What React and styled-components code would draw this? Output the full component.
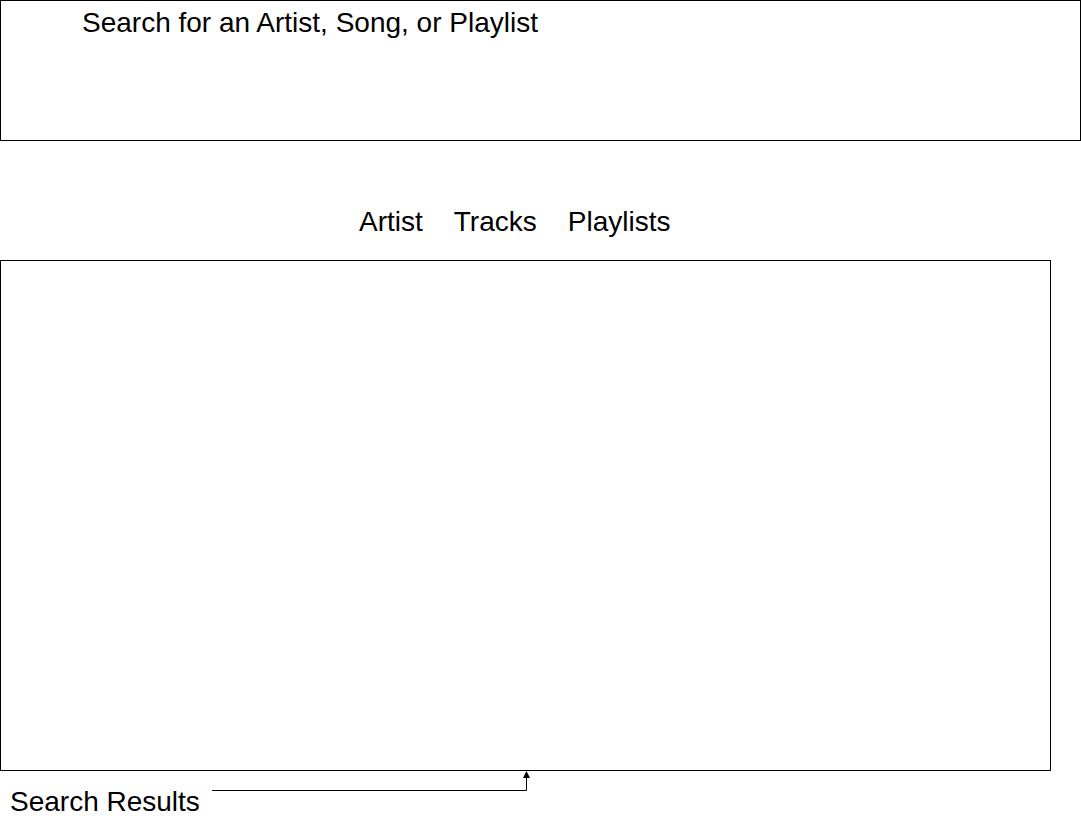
import * as React from "react";
import styled, { createGlobalStyle } from "styled-components";

const GlobalStyle = createGlobalStyle`
  body {
    margin: 0;
    background: #fff;
    color: #000;
    font-family: "Liberation Sans", Arial, Helvetica, sans-serif;
  }
`;

const Page = styled.div`
  width: 1081px;
  height: 816px;
  overflow: hidden;
  font-size: 28px;
  line-height: 32px;
`;

const SearchBox = styled.div`
  box-sizing: border-box;
  width: 1081px;
  height: 141px;
  border: 1px solid #000;
  padding: 6px 0 0 81px;
`;

const Tabs = styled.nav`
  display: flex;
  gap: 31px;
  margin-top: 65px;
  padding-left: 359px;
`;

const Tab = styled.span`
  white-space: nowrap;
`;

const ResultsBox = styled.div`
  box-sizing: border-box;
  width: 1051px;
  height: 511px;
  margin-top: 22px;
  border: 1px solid #000;
`;

const Footer = styled.div`
  display: flex;
  align-items: flex-start;
  gap: 12px;
`;

const Label = styled.span`
  padding: 15px 0 0 10px;
  white-space: nowrap;
`;

const Connector = () => (
  <svg width="320" height="24" viewBox="0 0 320 24">
    <path d="M0 19.5 H314.5 V6" fill="none" stroke="#000" strokeWidth="1" />
    <polygon points="314.5,0 318,7 311,7" fill="#000" />
  </svg>
);

const App = () => {
  const tabs = ["Artist", "Tracks", "Playlists"];

  return (
    <Page>
      <GlobalStyle />
      <SearchBox>Search for an Artist, Song, or Playlist</SearchBox>
      <Tabs>
        {tabs.map((t) => (
          <Tab key={t}>{t}</Tab>
        ))}
      </Tabs>
      <ResultsBox />
      <Footer>
        <Label>Search Results</Label>
        <Connector />
      </Footer>
    </Page>
  );
};

export default App;
